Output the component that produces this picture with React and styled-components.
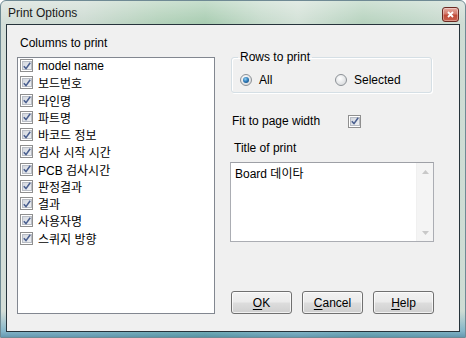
import React from "react";
import styled, { createGlobalStyle } from "styled-components";

const Global = createGlobalStyle`
  html, body { margin: 0; padding: 0; }
  body {
    width: 466px; height: 338px; overflow: hidden;
    font-family: "Liberation Sans", "Noto Sans CJK KR", sans-serif;
    font-size: 12px; color: #000;
  }
`;

const Window = styled.div`
  width: 466px;
  height: 338px;
  box-sizing: border-box;
  display: flex;
  flex-direction: column;
  border: 1px solid #6f8a94;
  border-radius: 6px 6px 0 0;
  background:
    linear-gradient(180deg, rgba(255,255,255,0.35) 0px, rgba(255,255,255,0) 22px, rgba(0,0,0,0) 310px, rgba(70,150,190,0.55) 330px, rgba(40,110,150,0.7) 338px),
    linear-gradient(90deg, #d4ded8 0%, #cddbd2 18%, #b4d2bb 34%, #a9cdb2 44%, #c6dbcc 56%, #d3e1d7 64%, #b7d3bf 78%, #c2d8c9 90%, #cfdcd4 100%);
`;

const TitleBar = styled.div`
  height: 23px;
  display: flex;
  align-items: flex-start;
  justify-content: space-between;
  padding: 0 6px 0 7px;
`;

const TitleText = styled.span`
  margin-top: 5px;
  font-size: 12px;
  line-height: 14px;
  color: #1a1a1a;
`;

const CloseButton = styled.div`
  margin-top: 6px;
  width: 17px;
  height: 15px;
  box-sizing: border-box;
  border: 1px solid #6a2a22;
  border-radius: 3px;
  background: linear-gradient(180deg, #e6aaa0 0%, #d37a6c 45%, #c04a38 55%, #c9604d 100%);
  display: flex;
  align-items: center;
  justify-content: center;
  box-shadow: inset 0 0 0 1px rgba(255,255,255,0.35);
`;

const Client = styled.div`
  flex: 1;
  margin: 0 5px 5px 5px;
  border: 1px solid #26333b;
  background: #f0f0f0;
  display: flex;
  padding: 0 0 0 10px;
`;

const LeftColumn = styled.div`
  width: 198px;
  display: flex;
  flex-direction: column;
  padding-top: 10px;
`;

const Label = styled.div`
  line-height: 16px;
  padding-left: ${(p) => p.$indent || 0}px;
  margin-bottom: ${(p) => p.$mb || 0}px;
  margin-top: ${(p) => p.$mt || 0}px;
`;

const ListBox = styled.div`
  height: 257px;
  box-sizing: border-box;
  border: 1px solid #828790;
  background: #fff;
  padding: 0 0 0 2px;
`;

const ListItem = styled.div`
  height: 17.25px;
  display: flex;
  align-items: center;
  gap: 5px;
  margin-top: ${(p) => (p.$first ? -1 : 0)}px;
  white-space: nowrap;
`;

const CheckBox = styled.span`
  width: 13px;
  height: 13px;
  box-sizing: border-box;
  border: 1px solid #8f8f8f;
  background: #fff;
  padding: 1px;
  display: inline-flex;
  flex-shrink: 0;
  & > span {
    flex: 1;
    border: 1px solid #b8bcc4;
    background: linear-gradient(135deg, #d4d8df 0%, #eef0f3 100%);
    display: flex;
    align-items: center;
    justify-content: center;
  }
`;

const RightColumn = styled.div`
  width: 204px;
  margin-left: 15px;
  display: flex;
  flex-direction: column;
  padding-bottom: 17px;
`;

const Group = styled.fieldset`
  margin: 25px 2px 0 1px;
  padding: 0 0 5px 8px;
  border: 1px solid #d5dfe5;
  border-radius: 3px;
  box-shadow: inset 1px 1px 0 #fff, 1px 1px 0 #fff;
  min-inline-size: 0;
  display: flex;
`;

const Legend = styled.legend`
  margin-left: -2px;
  padding: 0 2px;
  line-height: 14px;
`;

const RadioOption = styled.label`
  width: 95px;
  margin-top: 9px;
  display: flex;
  align-items: center;
  gap: 7px;
  line-height: 14px;
`;

const Radio = styled.span`
  width: 12px;
  height: 12px;
  box-sizing: border-box;
  border-radius: 50%;
  border: 1px solid #8c9196;
  background: radial-gradient(circle at 40% 35%, #ffffff 0%, #e2e4e6 60%, #cfd2d5 100%);
  display: flex;
  align-items: center;
  justify-content: center;
  &::after {
    content: "";
    display: ${(p) => (p.$checked ? "block" : "none")};
    width: 6px;
    height: 6px;
    border-radius: 50%;
    background: radial-gradient(circle at 40% 35%, #8fd0f5 0%, #2a76b4 50%, #0e3e6e 100%);
  }
`;

const OptionRow = styled.div`
  margin-top: 21px;
  margin-left: 2px;
  display: flex;
  align-items: center;
  line-height: 14px;
  & > span:first-child { width: 116px; }
`;

const TextBox = styled.div`
  height: 80px;
  box-sizing: border-box;
  border: 1px solid #abadb3;
  border-top-color: #9ea0a6;
  background: #fff;
  display: flex;
`;

const TextContent = styled.div`
  flex: 1;
  padding: 3px 0 0 4px;
  line-height: 16px;
`;

const ScrollBar = styled.div`
  width: 16px;
  background: #f4f4f4;
  border-left: 1px solid #f0f0f0;
  display: flex;
  flex-direction: column;
  justify-content: space-between;
  align-items: center;
  padding: 7px 0 6px;
`;

const Buttons = styled.div`
  margin-top: auto;
  display: flex;
  gap: 10px;
  padding-left: 1px;
`;

const Button = styled.button`
  width: 62px;
  height: 23px;
  box-sizing: border-box;
  border: 1px solid #707070;
  border-radius: 3px;
  background: linear-gradient(180deg, #f2f2f2 0%, #ebebeb 48%, #dddddd 52%, #cfcfcf 100%);
  box-shadow: inset 0 0 0 1px rgba(255,255,255,0.7);
  font-family: "Liberation Sans", sans-serif;
  font-size: 12px;
  font-weight: 400;
  color: #000;
  padding: 0;
  & u { text-decoration: underline; text-underline-offset: 2px; }
`;

const Check = () => (
  <svg width="8" height="8" viewBox="0 0 8 8">
    <path d="M0.8 4.2 L3 6.6 L7.2 0.8" fill="none" stroke="#4a5f8f" strokeWidth="1.6" />
  </svg>
);

const CheckMark = () => (
  <CheckBox>
    <span>
      <Check />
    </span>
  </CheckBox>
);

const Arrow = ({ up }) => (
  <svg width="7" height="4" viewBox="0 0 7 4">
    <path d={up ? "M0 4 L3.5 0 L7 4 Z" : "M0 0 L3.5 4 L7 0 Z"} fill="#c8c8c8" />
  </svg>
);

const columns = [
  "model name",
  "보드번호",
  "라인명",
  "파트명",
  "바코드 정보",
  "검사 시작 시간",
  "PCB 검사시간",
  "판정결과",
  "결과",
  "사용자명",
  "스퀴지 방향",
];

export default function App() {
  return (
    <>
      <Global />
      <Window>
        <TitleBar>
          <TitleText>Print Options</TitleText>
          <CloseButton>
            <svg width="7" height="7" viewBox="0 0 7 7">
              <path d="M1 1 L6 6 M6 1 L1 6" stroke="#fff" strokeWidth="1.8" />
            </svg>
          </CloseButton>
        </TitleBar>
        <Client>
          <LeftColumn>
            <Label $indent={3} $mb={6}>Columns to print</Label>
            <ListBox>
              {columns.map((c, i) => (
                <ListItem key={c} $first={i === 0}>
                  <CheckMark />
                  <span>{c}</span>
                </ListItem>
              ))}
            </ListBox>
          </LeftColumn>
          <RightColumn>
            <Group>
              <Legend>Rows to print</Legend>
              <RadioOption>
                <Radio $checked />
                <span>All</span>
              </RadioOption>
              <RadioOption>
                <Radio />
                <span>Selected</span>
              </RadioOption>
            </Group>
            <OptionRow>
              <span>Fit to page width</span>
              <CheckMark />
            </OptionRow>
            <Label $indent={4} $mt={12} $mb={6}>Title of print</Label>
            <TextBox>
              <TextContent>Board 데이타</TextContent>
              <ScrollBar>
                <Arrow up />
                <Arrow />
              </ScrollBar>
            </TextBox>
            <Buttons>
              <Button><u>O</u>K</Button>
              <Button><u>C</u>ancel</Button>
              <Button><u>H</u>elp</Button>
            </Buttons>
          </RightColumn>
        </Client>
      </Window>
    </>
  );
}
